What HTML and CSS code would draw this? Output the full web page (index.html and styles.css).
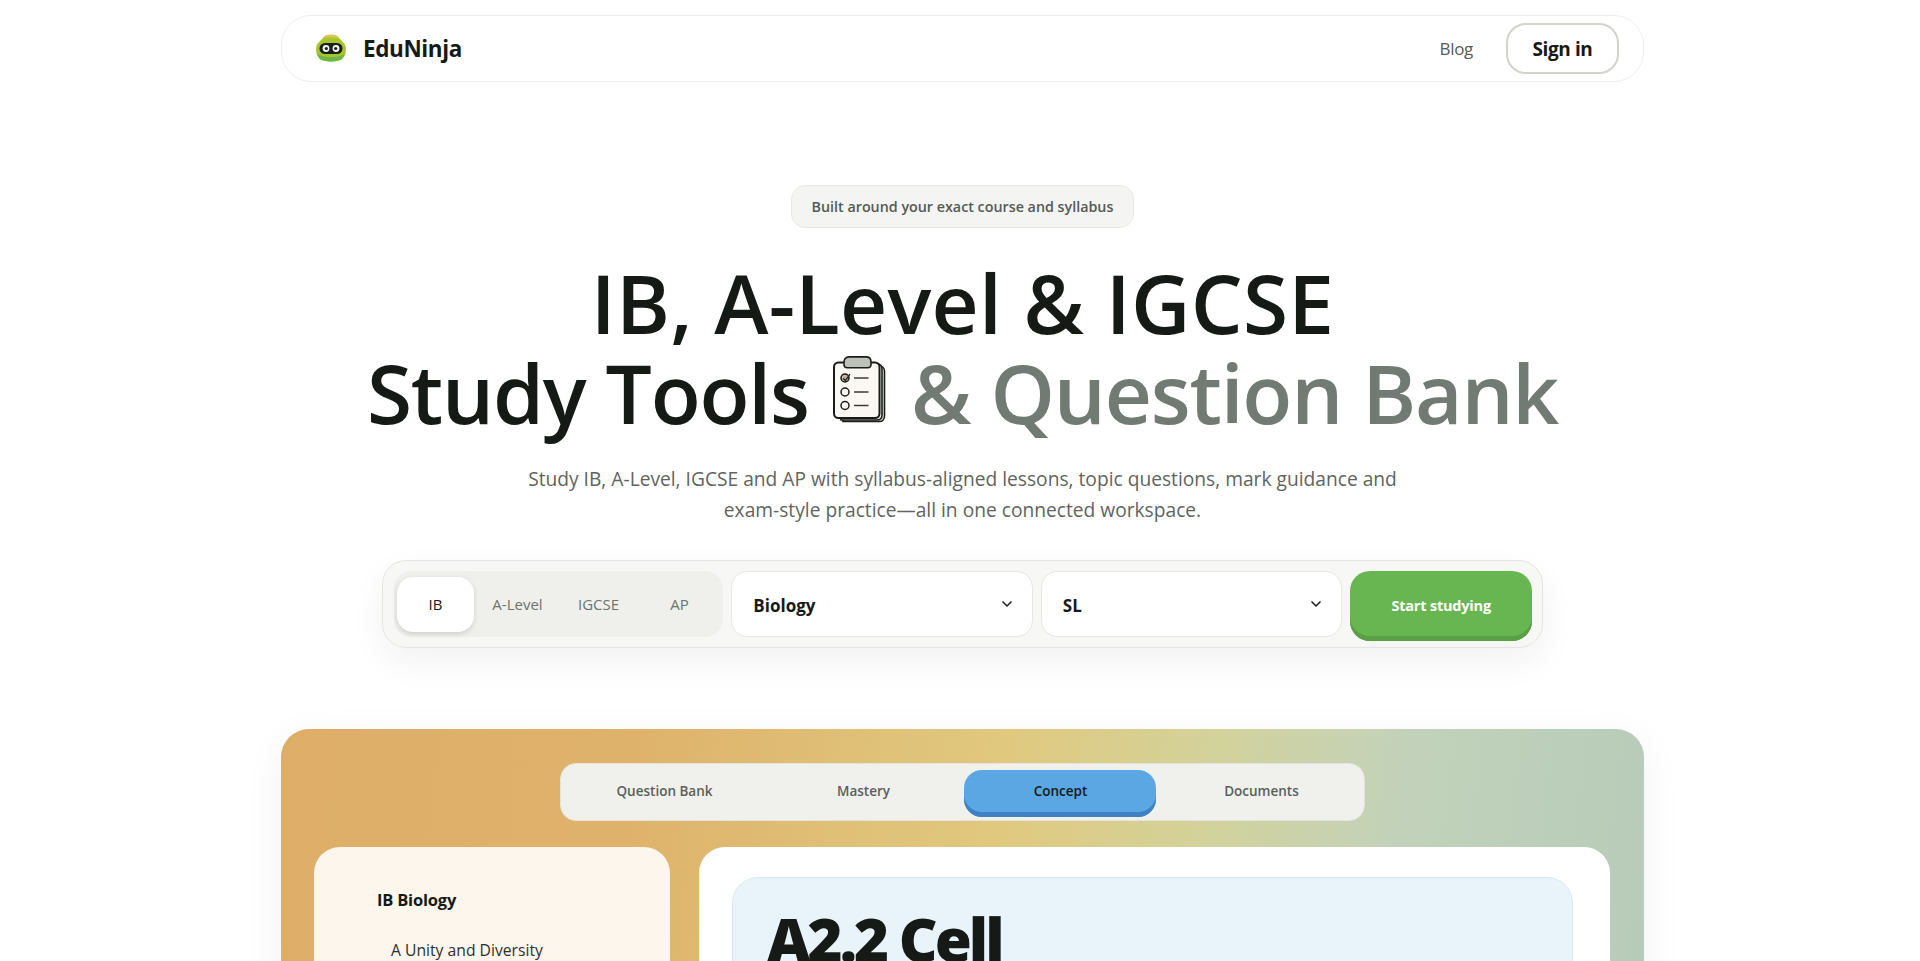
FILE: index.html
```html
<!DOCTYPE html>
<html lang="en">
<head>
    <meta charset="UTF-8">
    <meta name="viewport" content="width=device-width, initial-scale=1.0">
    <title>EduNinja</title>
    <link rel="stylesheet" href="styles.css">
</head>
<body>
    <div class="page">
        <nav class="nav">
            <a class="brand" href="#">
                <span class="brand-logo">
                    <svg width="30" height="29" viewBox="0 0 30 29">
                        <path d="M9 2C11 .4 19 .4 21 2C23 3.500 24 5.500 26 7C29 9.500 30 12.500 30 15.500C30 19 28.500 22 26.500 24.500C23 28.500 7 28.500 3.500 24.500C1.500 22 0 19 0 15.500C0 12.500 1 9.500 4 7C6 5.500 7 3.500 9 2Z" fill="#a8c52c"/>
                        <path d="M.6 19C4 22.500 9 23 15 23C21 23 26 22.500 29.400 19C28.700 21 27.700 23 26.500 24.500C23 28.500 7 28.500 3.500 24.500C2.300 23 1.300 21 .6 19Z" fill="#6cb548"/>
                        <path d="M9 2C11 .4 19 .4 21 2C21.800 2.600 22.500 3.300 23 4C18 3 12 3 7 4C7.500 3.300 8.200 2.600 9 2Z" fill="#d8c65c"/>
                        <rect x="3.500" y="9" width="23" height="11" rx="5.500" fill="#1b1f1c"/>
                        <circle cx="10" cy="14.500" r="3.400" fill="#f4f6ee"/>
                        <circle cx="20" cy="14.500" r="3.400" fill="#f4f6ee"/>
                        <circle cx="10.300" cy="14.500" r="1.600" fill="#1b1f1c"/>
                        <circle cx="19.700" cy="14.500" r="1.600" fill="#1b1f1c"/>
                    </svg>
                </span>
                <span class="brand-name">EduNinja</span>
            </a>
            <div class="nav-links">
                <a class="nav-link" href="#">Blog</a>
                <a class="sign-in" href="#">Sign in</a>
            </div>
        </nav>

        <header class="hero">
            <div class="hero-pill">Built around your exact course and syllabus</div>
            <h1 class="hero-title">
                <span class="title-line title-first">IB, A-Level &amp; IGCSE</span>
                <span class="title-line title-second">Study Tools
                    <svg class="title-icon" width="54" height="67" viewBox="0 0 54 67">
                        <path d="M10 10H46C49 10 51.500 12 51.500 15V60C51.500 63 49.500 65.500 46.500 65.500H10Z" fill="#eceee8" stroke="#1a1c1a" stroke-width="1.600"/>
                        <path d="M6 8H44C47 8 49 10 49 13V59C49 62 47 64 44 64H8Z" fill="#f4f3ee" stroke="#1a1c1a" stroke-width="1.600"/>
                        <rect x="1" y="6.500" width="45.500" height="55.500" rx="4.500" fill="#fbf8f3" stroke="#1a1c1a" stroke-width="2"/>
                        <path d="M16 .9H33C36 .9 38 3 38 6V8.500C38 10.500 36.500 11.800 34.500 11.800H14.500C12.500 11.800 11 10.500 11 8.500V6C11 3 13 .9 16 .9Z" fill="#bcc2b8" stroke="#1a1c1a" stroke-width="1.600"/>
                        <circle cx="12" cy="22" r="4" fill="#b9bdb5" stroke="#1a1c1a" stroke-width="1.500"/>
                        <circle cx="12" cy="22" r="1.500" fill="#e6a24a"/>
                        <path d="M10 22.500L12.500 24.500L17 18" fill="none" stroke="#1a1c1a" stroke-width="1.300"/>
                        <circle cx="12" cy="36" r="4" fill="none" stroke="#1a1c1a" stroke-width="1.500"/>
                        <circle cx="12" cy="49.500" r="4" fill="none" stroke="#1a1c1a" stroke-width="1.500"/>
                        <path d="M21 22H35.500M21 36H35.500M21 49.500H35.500" stroke="#3a3d3a" stroke-width="1.700"/>
                    </svg>
                    <span class="title-muted">&amp; Question Bank</span>
                </span>
            </h1>
            <p class="hero-sub">Study IB, A-Level, IGCSE and AP with syllabus-aligned lessons, topic questions, mark guidance and<br>exam-style practice—all in one connected workspace.</p>

            <div class="picker">
                <div class="curriculum-tabs">
                    <button class="curriculum-tab active">IB</button>
                    <button class="curriculum-tab">A-Level</button>
                    <button class="curriculum-tab">IGCSE</button>
                    <button class="curriculum-tab">AP</button>
                </div>
                <div class="select-box">
                    <span>Biology</span>
                    <svg width="12" height="8" viewBox="0 0 12 8"><path d="M1.500 1.500L6 6L10.500 1.500" fill="none" stroke="#1a1c1a" stroke-width="1.500"/></svg>
                </div>
                <div class="select-box">
                    <span>SL</span>
                    <svg width="12" height="8" viewBox="0 0 12 8"><path d="M1.500 1.500L6 6L10.500 1.500" fill="none" stroke="#1a1c1a" stroke-width="1.500"/></svg>
                </div>
                <button class="start-btn">Start studying</button>
            </div>
        </header>

        <section class="demo">
            <div class="demo-tabs">
                <button class="demo-tab">Question Bank</button>
                <button class="demo-tab">Mastery</button>
                <button class="demo-tab active">Concept</button>
                <button class="demo-tab">Documents</button>
            </div>
            <div class="demo-body">
                <aside class="syllabus">
                    <div class="syllabus-title">IB Biology</div>
                    <div class="syllabus-item">A Unity and Diversity</div>
                </aside>
                <div class="lesson">
                    <div class="lesson-head">
                        <h2 class="lesson-title">A2.2 Cell</h2>
                    </div>
                </div>
            </div>
        </section>
    </div>
</body>
</html>
```

FILE: styles.css
```css
* {
    box-sizing: border-box;
}
html, body {
    height: 100%;
}
body {
    margin: 0;
    background: #fff;
    color: #161a17;
    font-family: "Open Sans", Arial, sans-serif;
    overflow: hidden;
}
a {
    color: inherit;
    text-decoration: none;
}
button {
    font-family: inherit;
    border: none;
    background: none;
    cursor: pointer;
}
.page {
    width: 1363px;
    margin-left: 281px;
    padding-top: 15px;
}

/* nav */
.nav {
    height: 67px;
    display: flex;
    align-items: center;
    justify-content: space-between;
    padding: 0 24px 0 34px;
    border: 1px solid #eeeeea;
    border-radius: 30px;
}
.brand {
    display: flex;
    align-items: center;
    gap: 17px;
}
.brand-logo {
    display: flex;
    width: 30px;
    height: 29px;
}
.brand-name {
    font-size: 22.500px;
    font-weight: 700;
    letter-spacing: -0.4px;
}
.nav-links {
    display: flex;
    align-items: center;
    gap: 33px;
}
.nav-link {
    font-size: 17px;
    letter-spacing: -0.3px;
    color: #555a55;
}
.sign-in {
    width: 113px;
    height: 51px;
    display: flex;
    align-items: center;
    justify-content: center;
    border: 2px solid #d2d4cb;
    border-radius: 20px;
    font-size: 19px;
    font-weight: 700;
    letter-spacing: -0.4px;
}

/* hero */
.hero {
    display: flex;
    flex-direction: column;
    align-items: center;
}
.hero-pill {
    margin-top: 103px;
    height: 43px;
    width: 343px;
    display: flex;
    align-items: center;
    justify-content: center;
    background: #f4f4f3;
    border: 1px solid #e9e9e4;
    border-radius: 14px;
    font-size: 14.300px;
    font-weight: 600;
    color: #555a55;
}
.hero-title {
    margin: 29px 0 0;
    font-size: 82px;
    font-weight: 600;
    line-height: 90px;
    text-align: center;
}
.title-line {
    display: block;
    white-space: nowrap;
}
.title-first {
    letter-spacing: 0.2px;
}
.title-second {
    letter-spacing: -1.2px;
}
.title-icon {
    vertical-align: 1px;
    margin: 0 4px;
}
.title-muted {
    color: #727a74;
}
.hero-sub {
    margin: 26px 0 0;
    font-size: 19.200px;
    line-height: 31px;
    color: #5f645f;
    text-align: center;
}
.picker {
    margin-top: 35px;
    width: 1161px;
    height: 88px;
    display: flex;
    align-items: flex-start;
    gap: 8px;
    padding: 10px 10px 0 11px;
    background: #f7f7f5;
    border: 1px solid #e6e6e1;
    border-radius: 24px;
    box-shadow: 0 14px 34px rgba(30, 35, 30, 0.06);
}
.curriculum-tabs {
    width: 330px;
    height: 66px;
    display: flex;
    align-items: center;
    padding: 0 3px;
    background: #eff0ec;
    border-radius: 18px;
}
.curriculum-tab {
    width: 81px;
    height: 55px;
    font-size: 15px;
    color: #6d736e;
}
.curriculum-tab.active {
    width: 77px;
    margin-right: 3px;
    background: #fff;
    border-radius: 16px;
    color: #161a17;
    box-shadow: 0 2px 5px rgba(30, 35, 30, 0.16);
}
.select-box {
    width: 302px;
    height: 66px;
    display: flex;
    align-items: center;
    justify-content: space-between;
    padding: 3px 19px 0 21px;
    background: #fff;
    border: 1px solid #e7e7e2;
    border-radius: 16px;
    font-size: 17px;
    font-weight: 700;
}
.select-box svg {
    margin-top: -3px;
}
.start-btn {
    width: 182px;
    height: 70px;
    padding-bottom: 3px;
    background: #68b651;
    border-radius: 20px;
    box-shadow: inset 0 -5px 0 #5a9f45;
    color: #fff;
    font-size: 14.500px;
    font-weight: 700;
    letter-spacing: -0.2px;
}

/* demo panel */
.demo {
    margin-top: 81px;
    height: 400px;
    padding: 34px 34px 0 33px;
    border-radius: 28px;
    background: linear-gradient(97deg, #deae69 0%, #dfb26b 25%, #e0c97f 52%, #d3d29a 66%, #c2d2ba 80%, #b6cbb9 100%);
    box-shadow: 0 10px 40px rgba(30, 35, 30, 0.06);
}
.demo-tabs {
    width: 805px;
    height: 58px;
    margin: 0 auto;
    display: flex;
    align-items: flex-start;
    padding: 6px 8px 0 9px;
    background: #f0f1ec;
    border: 1px solid #e3e4dd;
    border-radius: 16px;
}
.demo-tab {
    width: 198px;
    height: 47px;
    padding-bottom: 6px;
    font-size: 13.500px;
    font-weight: 600;
    color: #5a5f5a;
}
.demo-tab:first-child {
    padding-right: 12px;
}
.demo-tab:last-child {
    padding-left: 14px;
}
.demo-tab.active {
    width: 194px;
    margin: 0 3px;
    background: #5aa7e3;
    border-radius: 18px;
    box-shadow: inset 0 -5px 0 #3f82c4;
    color: #161a17;
}
.demo-body {
    margin-top: 26px;
    display: flex;
    gap: 29px;
}
.syllabus {
    width: 356px;
    height: 320px;
    padding: 41px 63px;
    background: #fdf6ec;
    border-radius: 26px;
}
.syllabus-title {
    font-size: 16.500px;
    font-weight: 700;
    letter-spacing: -0.2px;
    line-height: 24px;
}
.syllabus-item {
    margin: 26px 0 0 14px;
    font-size: 15.700px;
    line-height: 24px;
    color: #2c302d;
}
.lesson {
    width: 911px;
    height: 320px;
    padding: 30px 37px 0 33px;
    background: #fff;
    border-radius: 26px;
}
.lesson-head {
    height: 260px;
    padding: 25px 34px;
    background: #e9f4fa;
    border: 1px solid #d9e8ef;
    border-radius: 26px;
}
.lesson-title {
    margin: 0;
    font-family: "Noto Sans", Arial, sans-serif;
    font-size: 60px;
    font-weight: 900;
    line-height: 72px;
    letter-spacing: -3px;
}
```
